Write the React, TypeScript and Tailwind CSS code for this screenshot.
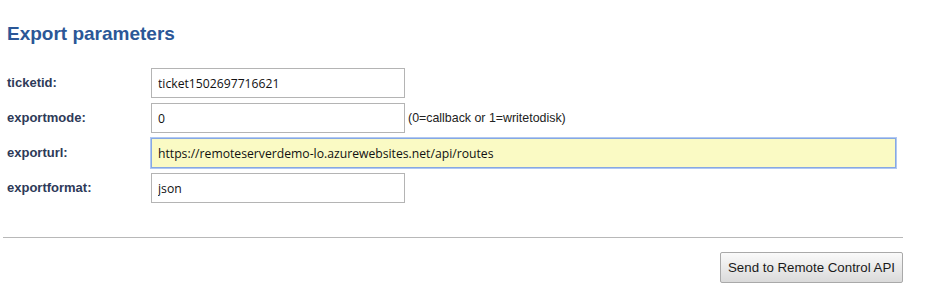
import React from 'react';

const rows: Array<{ label: string; value: string; wide?: boolean; focused?: boolean; hint?: string }> = [
  { label: 'ticketid:', value: 'ticket1502697716621' },
  { label: 'exportmode:', value: '0', hint: '(0=callback or 1=writetodisk)' },
  { label: 'exporturl:', value: 'https://remoteserverdemo-lo.azurewebsites.net/api/routes', wide: true, focused: true },
  { label: 'exportformat:', value: 'json' },
];

export default function App() {
  return (
    <div className="w-[930px] h-[292px] bg-white font-['Liberation_Sans',Arial,sans-serif]">
      <div className="ml-[3px] w-[900px]">
        <div className="pl-[4px]">
          {/* Header */}
          <h1 className="pt-[23px] text-[19px] leading-[22px] font-bold text-[#2b5797]">Export parameters</h1>

          {/* Parameter rows */}
          <div className="mt-[23px] flex flex-col gap-[5px]">
            {rows.map((row) => (
              <div key={row.label} className="flex items-center h-[30px]">
                <label className="w-[144px] shrink-0 text-[13px] font-bold text-[#2e3a58]">{row.label}</label>
                <input
                  readOnly
                  value={row.value}
                  className={
                    row.focused
                      ? "h-[30px] w-[745px] px-[6px] text-[12.2px] text-[#111] font-['Open_Sans',sans-serif] bg-[#fafac4] border border-[#86a8e4] ring-1 ring-[#b0c8f2] outline-none"
                      : "h-[30px] w-[254px] px-[6px] text-[12.2px] text-[#111] font-['Open_Sans',sans-serif] bg-white border border-[#b4b4b4] outline-none"
                  }
                />
                {row.hint && <span className="ml-[3px] text-[12.4px] text-[#222]">{row.hint}</span>}
              </div>
            ))}
          </div>
        </div>

        <div className="mt-[34px] border-t border-[#b8b8b8]" />

        <div className="flex justify-end mt-[14px]">
          <button className="h-[31px] w-[183px] text-[13.3px] text-[#1a1a1a] border border-[#a9a9a9] rounded-[2px] bg-gradient-to-b from-[#fafafa] to-[#dadada]">
            Send to Remote Control API
          </button>
        </div>
      </div>
    </div>
  );
}
